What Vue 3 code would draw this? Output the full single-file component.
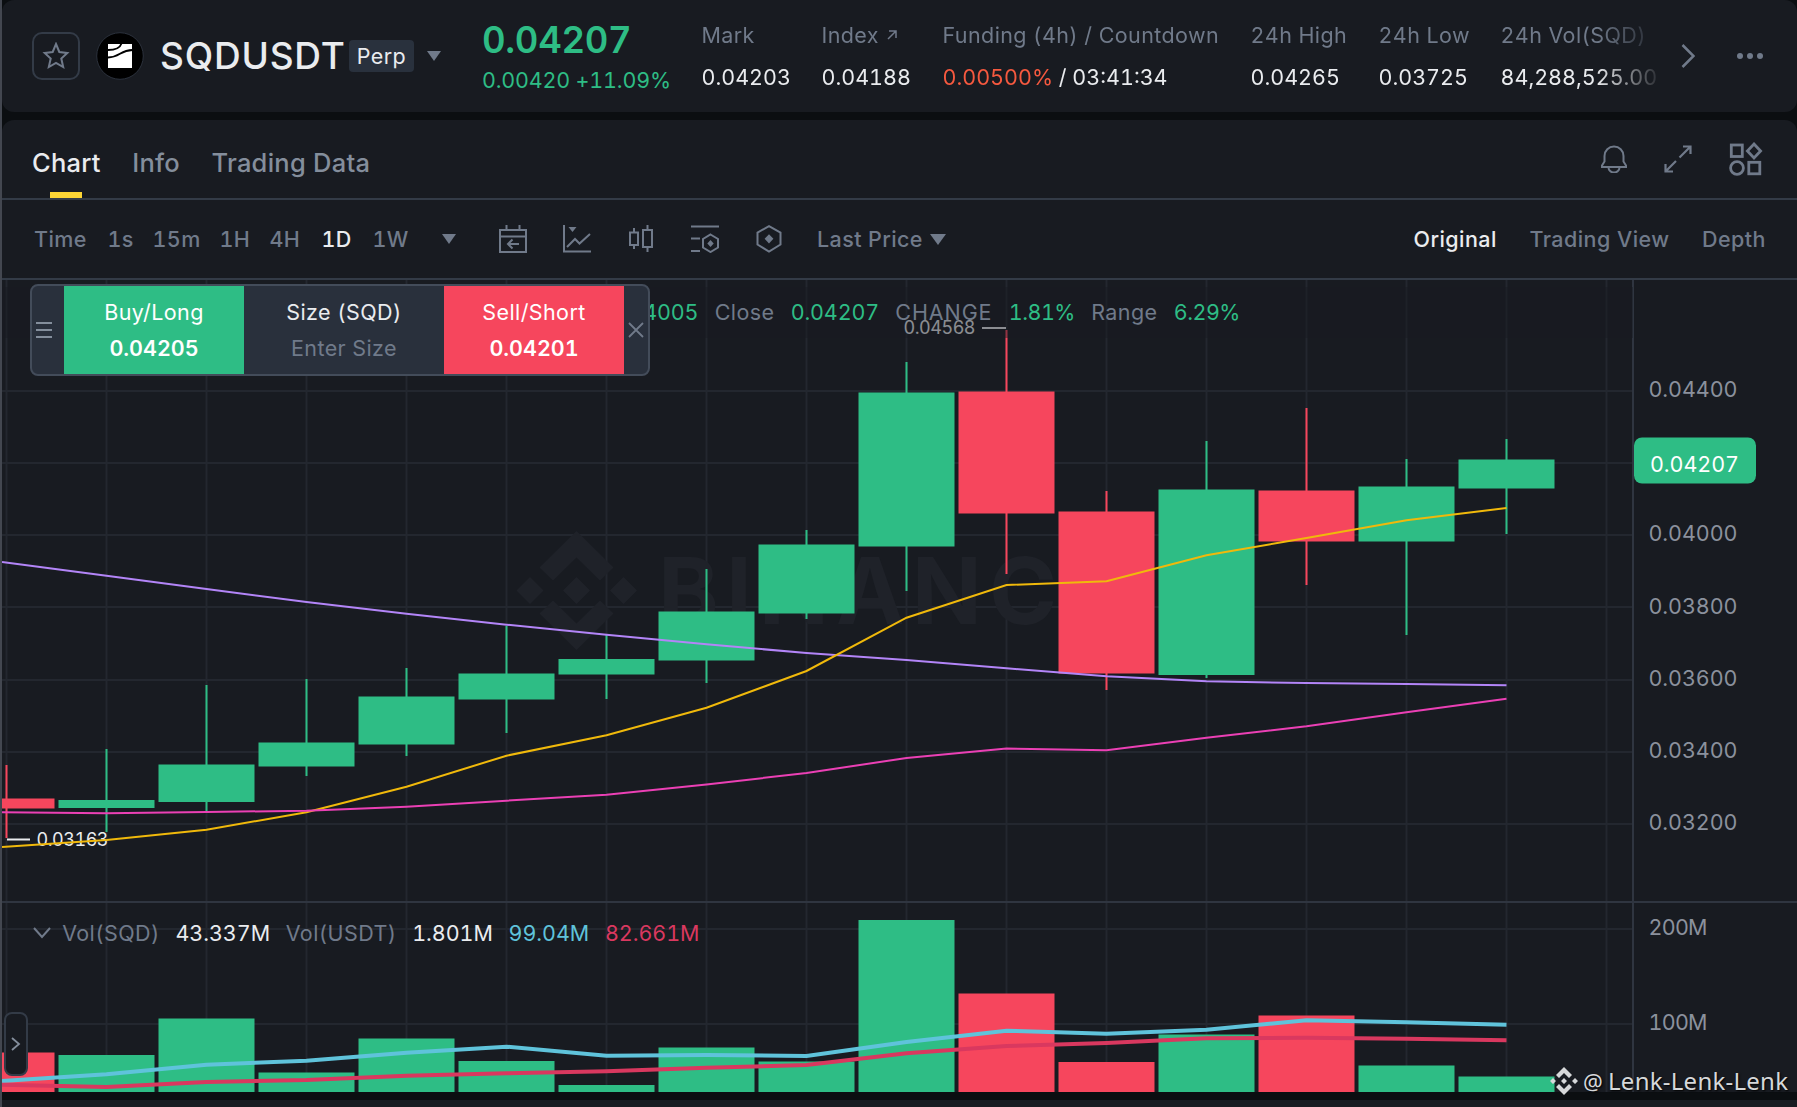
<template>
  <div class="page">
    <!-- Ticker bar -->
    <header class="ticker">
      <button class="star">
        <svg width="28" height="28" viewBox="0 0 28 28" fill="none" stroke="#707a8a" stroke-width="2">
          <path d="M14 2 17.300 10l8 .9-6 5.600 1.900 8.500L14 20.900 6.800 25l1.900-8.500-6-5.600 8-.9z" />
        </svg>
      </button>
      <svg class="coin" width="48" height="48" viewBox="0 0 48 48">
        <circle cx="24" cy="24" r="23.300" fill="#000" stroke="#2b313c" />
        <path d="M12 12h24v24H12z" fill="#fff" />
        <path d="M12 18c8 0 12-2 13.500-6.500M12 25.500c12 0 12-7.500 24.500-7.500" fill="none" stroke="#000" stroke-width="1.800" />
      </svg>
      <h1 class="symbol">SQDUSDT</h1>
      <span class="perp">Perp</span>
      <svg class="caret" width="14" height="10" viewBox="0 0 14 10"><path d="M0 0h14L7 10z" fill="#707a8a" /></svg>

      <div class="last">
        <div class="last-price">0.04207</div>
        <div class="last-change">0.00420 +11.09%</div>
      </div>

      <div class="stats">
        <div v-for="s in stats" :key="s.label" class="stat">
          <div class="stat-label">
            {{ s.label }}
            <svg v-if="s.arrow" width="10" height="10" viewBox="0 0 10 10" fill="none" stroke="#707a8a" stroke-width="1.500">
              <path d="M1 9 9 1M2 1h7v7" />
            </svg>
          </div>
          <div class="stat-value">
            <span v-if="s.rate" class="rate">{{ s.rate }}</span>{{ s.value }}
          </div>
        </div>
      </div>

      <svg class="next" width="14" height="24" viewBox="0 0 14 24" fill="none" stroke="#707a8a" stroke-width="2.500">
        <path d="M1.500 1 12.500 12 1.500 23" />
      </svg>
      <svg class="more" width="26" height="6" viewBox="0 0 26 6" fill="#707a8a">
        <circle cx="3" cy="3" r="3" /><circle cx="13" cy="3" r="3" /><circle cx="23" cy="3" r="3" />
      </svg>
    </header>

    <!-- Chart panel -->
    <main class="panel">
      <nav class="tabs">
        <a class="tab active">Chart</a>
        <a class="tab">Info</a>
        <a class="tab">Trading Data</a>
        <div class="tab-icons">
          <svg width="28" height="28" viewBox="0 0 28 28" fill="none" stroke="#707a8a" stroke-width="2">
            <path d="M2 22h24v-1.500l-2.500-4V11a9.500 9.500 0 0 0-19 0v5.500L2 20.500zM8.500 22.500a5.500 5 0 0 0 11 0" />
          </svg>
          <svg width="28" height="28" viewBox="0 0 28 28" fill="none" stroke="#707a8a" stroke-width="2.200">
            <path d="M15.500 12.500 26.500 1.500M19 1.500h7.500V9M12 16 1.500 26.500M1.500 19v7.500H9" />
          </svg>
          <svg class="widgets" width="34" height="34" viewBox="0 0 34 34" fill="none" stroke="#707a8a" stroke-width="2.800">
            <rect x="2.300" y="3" width="11" height="11.500" />
            <path d="m25 2 6.600 7-6.600 7-6.600-7z" />
            <circle cx="8" cy="26" r="6.400" />
            <rect x="19.800" y="20.300" width="11" height="11.500" />
          </svg>
        </div>
      </nav>

      <div class="toolbar">
        <div class="times">
          <span v-for="t in times" :key="t" :class="{ on: t === '1D' }">{{ t }}</span>
        </div>
        <svg class="caret" width="14" height="10" viewBox="0 0 14 10"><path d="M0 0h14L7 10z" fill="#707a8a" /></svg>
        <div class="tools">
          <svg width="28" height="28" viewBox="0 0 28 28" fill="none" stroke="#707a8a" stroke-width="2">
            <path d="M1 5h26v22H1zM1 11.500h26M7.500 0v5M20.500 0v5M20 19H9M13.500 14.500 9 19l4.500 4.500" />
          </svg>
          <svg width="28" height="28" viewBox="0 0 28 28" fill="none" stroke="#707a8a" stroke-width="2">
            <path d="M1 0v26.500h27M4 22l8-8 4.500 4.500L27 9" />
            <path d="M5.500 2h8L9.500 7z" fill="#707a8a" stroke="none" />
          </svg>
          <svg width="28" height="28" viewBox="0 0 28 28" fill="none" stroke="#707a8a" stroke-width="2">
            <path d="M3 7.500h8v12.500H3zM7 3v4.500M7 20v4M16 5h9v17h-9zM20.500 0v5M20.500 22v5" />
          </svg>
          <svg width="28" height="28" viewBox="0 0 28 28" fill="none" stroke="#707a8a" stroke-width="2">
            <path d="M0 1.500h28M0 13.500h9M0 26h9M19.500 9.500l7.500 4.500v8.500L19.500 27 12 22.500V14z" />
            <path d="m19.500 15 3.200 3.500-3.200 3.500-3.200-3.500z" fill="#707a8a" stroke="none" />
          </svg>
          <svg width="28" height="28" viewBox="0 0 28 28" fill="none" stroke="#707a8a" stroke-width="2">
            <path d="m14 1.200 11.500 6.300v12L14 26.500 2.500 19.500v-12z" />
            <path d="m14 9.200 4.400 4.600-4.400 4.600-4.400-4.600z" fill="#707a8a" stroke="none" />
          </svg>
        </div>
        <span class="price-type">Last Price</span>
        <svg class="caret" width="16" height="11" viewBox="0 0 16 11"><path d="M0 0h16L8 11z" fill="#707a8a" /></svg>
        <div class="views">
          <span class="on">Original</span>
          <span>Trading View</span>
          <span>Depth</span>
        </div>
      </div>

      <div class="chart">
        <svg class="plot" width="1797" height="812" viewBox="0 280 1797 812">
          <!-- grid -->
          <g stroke="#23272f" stroke-width="2">
            <line v-for="i in 17" :key="'v' + i" :x1="colX(i - 1)" :x2="colX(i - 1)" y1="280" y2="1092" />
            <line v-for="y in gridY" :key="'h' + y" x1="2" x2="1633" :y1="y" :y2="y" />
          </g>

          <!-- watermark -->
          <g fill="#1f2229">
            <path d="M576.500 531 613.500 567.500l-13.500 13-23.500-23-23.500 23-13.500-13zM576.500 650 613.500 613.500l-13.500-13-23.500 23-23.500-23-13.500 13z" />
            <path d="m576.500 577 13.500 13.500-13.500 13.500-13.500-13.500zM530 577l13.500 13.500L530 604l-13.500-13.500zM623.500 577l13.500 13.500-13.500 13.500-13.500-13.500z" />
            <text x="658" y="624" class="brand" textLength="462">BINANCE</text>
          </g>

          <!-- candles -->
          <g v-for="(c, i) in candles" :key="'c' + i" :fill="c[0] ? '#2ebd85' : '#f6465d'">
            <rect :x="colX(i) - 1" :y="c[1]" width="2" :height="c[4] - c[1]" />
            <rect :x="colX(i) - 48" :y="c[2]" width="96" :height="c[3] - c[2]" />
            <rect :x="colX(i) - 48" :y="c[5]" width="96" :height="1092 - c[5]" />
          </g>

          <!-- high / low marks -->
          <path d="M982 328h24" stroke="#eaecef" stroke-width="2" />
          <text x="903.500" y="334" class="mark" textLength="72">0.04568</text>
          <path d="M7 839.500h23" stroke="#eaecef" stroke-width="2" />
          <text x="36.500" y="846" class="mark" textLength="72">0.03163</text>

          <!-- moving averages -->
          <g fill="none">
            <polyline :points="toPoints(maPurple)" stroke="#b385f8" stroke-width="2" />
            <polyline :points="toPoints(maYellow)" stroke="#f0b90b" stroke-width="2" />
            <polyline :points="toPoints(maPink)" stroke="#eb40b5" stroke-width="2" />
            <polyline :points="toPoints(volCyan)" stroke="#5fc3db" stroke-width="4" />
            <polyline :points="toPoints(volRed)" stroke="#d9385f" stroke-width="4" />
          </g>

          <!-- axes -->
          <path d="M2 902h1795M1633 280v812" stroke="#2f3540" stroke-width="2" />
          <text v-for="a in axis" :key="a[0]" x="1648.500" :y="a[1]" class="axis" :textLength="a[2]">{{ a[0] }}</text>
          <rect x="1634" y="437.500" width="122" height="46" rx="8" fill="#2ebd85" />
          <text x="1650" y="472" class="axis tag" textLength="89">0.04207</text>
        </svg>

        <div class="ohlc">
          <span class="up low">0.04005</span>
          <span>Close</span><span class="up">0.04207</span>
          <span class="wide">CHANGE</span><span class="up pct">1.81%</span>
          <span>Range</span><span class="up pct">6.29%</span>
        </div>

        <div class="vol">
          <svg width="18" height="12" viewBox="0 0 18 12" fill="none" stroke="#707a8a" stroke-width="2"><path d="m1 1 8 9 8-9" /></svg>
          <span>Vol(SQD)</span><span class="num">43.337M</span>
          <span>Vol(USDT)</span><span class="num">1.801M</span>
          <span class="num cyan">99.04M</span><span class="num crimson">82.661M</span>
        </div>

        <!-- Quick order box -->
        <div class="order">
          <div class="grip"><i></i><i></i><i></i></div>
          <div class="side buy"><span>Buy/Long</span><b>0.04205</b></div>
          <div class="side size"><span>Size (SQD)</span><em>Enter Size</em></div>
          <div class="side sell"><span>Sell/Short</span><b>0.04201</b></div>
          <div class="close">
            <svg width="16" height="16" viewBox="0 0 16 16" stroke="#707a8a" stroke-width="1.800"><path d="m1 1 14 14M15 1 1 15" /></svg>
          </div>
        </div>

        <div class="drawer">
          <svg width="10" height="14" viewBox="0 0 10 14" fill="none" stroke="#848e9c" stroke-width="1.800"><path d="m1 1 7 6-7 6" /></svg>
        </div>
      </div>
    </main>
    <div class="below"></div>

    <div class="author">
      <svg width="28" height="28" viewBox="0 0 28 28" fill="currentColor">
        <path d="m14 0 8 8-3 3-5-5-5 5-3-3zM14 28l8-8-3-3-5 5-5-5-3 3zM14 11l3 3-3 3-3-3zM3 11l3 3-3 3-3-3zM25 11l3 3-3 3-3-3z" />
      </svg>
      <span class="at">@</span><span>Lenk-Lenk-Lenk</span>
    </div>
  </div>
</template>

<script setup>
const stats = [
  { label: 'Mark', value: '0.04203' },
  { label: 'Index', value: '0.04188', arrow: true },
  { label: 'Funding (4h) / Countdown', rate: '0.00500%', value: ' / 03:41:34' },
  { label: '24h High', value: '0.04265' },
  { label: '24h Low', value: '0.03725' },
  { label: '24h Vol(SQD)', value: '84,288,525.00' }
]

const times = ['Time', '1s', '15m', '1H', '4H', '1D', '1W']

const gridY = [391, 463, 535, 607, 680, 752, 824, 929, 1024]

// label, baseline, width
const axis = [
  ['0.04400', 397, 89],
  ['0.04000', 541, 89],
  ['0.03800', 614, 89],
  ['0.03600', 686, 89],
  ['0.03400', 758, 89],
  ['0.03200', 830, 89],
  ['200M', 935, 59],
  ['100M', 1030, 59]
]

// up, high, body top, body bottom, low, volume top
const candles = [
  [0, 765, 798.5, 808.5, 838, 1052.5],
  [1, 749, 800, 808, 832, 1055],
  [1, 685, 764.5, 802, 811, 1018.5],
  [1, 679, 742.5, 766.5, 776, 1072.5],
  [1, 668, 696.5, 744.5, 756, 1038.5],
  [1, 626, 673.5, 699.5, 733, 1061],
  [1, 635, 659, 674.5, 699, 1085],
  [1, 569, 611.5, 660.5, 683, 1047.5],
  [1, 530, 544.5, 613.5, 619, 1061.5],
  [1, 362, 392.5, 546.5, 591, 920],
  [0, 330, 391.5, 513.5, 574, 993.5],
  [0, 491, 511.5, 673.5, 690, 1062],
  [1, 441, 489.5, 675, 678, 1034.5],
  [0, 408, 490.5, 541.5, 585, 1015.5],
  [1, 459, 486.5, 541.5, 635, 1065.5],
  [1, 439, 459.5, 488.5, 534, 1076.5]
]

const maYellow = [847, 840, 829.7, 812.3, 786.7, 755.7, 735.3, 707.7, 671, 617.7, 585, 581.3, 555.3, 538, 520.3, 508]
const maPurple = [562, 575.7, 589, 602, 613.7, 624.7, 634.7, 644.3, 653, 660, 668.3, 676.3, 681.3, 683, 684, 685.3]
const maPink = [812.3, 813.3, 812, 810.7, 806.7, 800.7, 794.7, 784.5, 773, 758, 748.5, 750.3, 737.8, 726.3, 712.3, 698.7]
const volCyan = [1081, 1074.3, 1064.7, 1060.7, 1052.7, 1046.7, 1055.7, 1055, 1056, 1042, 1030.7, 1033.7, 1029.7, 1020.3, 1022.3, 1024.7]
const volRed = [1084.7, 1087, 1082, 1080, 1075.7, 1073.3, 1071.3, 1067.7, 1065, 1053.3, 1046, 1043, 1038.3, 1037.7, 1038.7, 1040.3]

const colX = (i) => 6.5 + i * 100

// the first point sits on the left edge of the plot
const toPoints = (ys) => ys.map((y, i) => `${i ? colX(i) : 2},${y}`).join(' ')
</script>

<style>
body {
  margin: 0;
  background: #0b0e11;
}
</style>

<style scoped>
.page {
  position: relative;
  box-sizing: border-box;
  width: 1797px;
  height: 1107px;
  overflow: hidden;
  display: flex;
  flex-direction: column;
  gap: 8px;
  background: #0b0e11;
  font-family: Inter, "Liberation Sans", sans-serif;
  font-size: 21.5px;
  font-variant-numeric: tabular-nums;
  letter-spacing: 0.4px;
  line-height: 26px;
  color: #707a8a;
  white-space: nowrap;
}

.page::after {
  content: "";
  position: absolute;
  left: 0;
  top: 0;
  width: 2px;
  height: 100%;
  background: #434750;
}

.ticker {
  display: flex;
  align-items: center;
  box-sizing: border-box;
  flex: none;
  height: 112px;
  margin-left: 2px;
  padding-left: 30px;
  background: #181b21;
  border-radius: 12px;
}

svg {
  display: block;
  flex: none;
}

.star {
  display: flex;
  align-items: center;
  justify-content: center;
  width: 48px;
  height: 48px;
  padding: 0;
  box-sizing: border-box;
  border: 2px solid #333b47;
  border-radius: 10px;
  background: none;
}

.coin {
  margin-left: 16px;
}

.symbol {
  width: 189px;
  margin: 0 0 0 16px;
  font-size: 37px;
  font-weight: 500;
  letter-spacing: 0.8px;
  line-height: 44px;
  color: #eaecef;
}

.perp {
  width: 65px;
  height: 32px;
  line-height: 32px;
  text-align: center;
  color: #eaecef;
  background: #29313d;
  border-radius: 4px;
}

.perp + .caret {
  margin-left: 13px;
}

.last {
  width: 220px;
  margin-left: 41px;
  color: #2ebd85;
}

.last-price {
  font-size: 36.5px;
  font-weight: 600;
  letter-spacing: -0.3px;
  line-height: 44px;
  margin-top: -2px;
}

.last-change {
  line-height: 26px;
  margin-top: 5px;
  letter-spacing: -0.2px;
}

.stats {
  display: grid;
  grid-template-columns: 120px 121px 308px 128px 122px 160px;
  width: 959px;
  margin-left: -0.5px;
  margin-right: 0.5px;
  -webkit-mask-image: linear-gradient(90deg, #000 895px, transparent 962px);
  mask-image: linear-gradient(90deg, #000 895px, transparent 962px);
}

.stat-label {
  display: flex;
  align-items: center;
  gap: 8px;
}

.stat-value {
  margin-top: 16px;
  color: #eaecef;
  letter-spacing: 0;
  white-space: pre;
}

.rate {
  color: #f6593f;
}

.next {
  margin-left: 20px;
}

.more {
  margin-left: 42px;
}

.panel {
  flex: none;
  height: 972px;
  margin-left: 2px;
  background: #181b21;
  border-radius: 12px 12px 0 0;
}

.tabs {
  display: flex;
  box-sizing: border-box;
  height: 80px;
  padding: 0 34px 0 30px;
  border-bottom: 2px solid #333b47;
  gap: 31.500px;
  font-size: 25.5px;
  font-weight: 500;
  letter-spacing: 0.25px;
  line-height: 85px;
  color: #848e9c;
}

.tab.active {
  position: relative;
  color: #eaecef;
}

.tab.active::after {
  content: "";
  position: absolute;
  left: 18px;
  bottom: 0;
  width: 32px;
  height: 6px;
  background: #fcd535;
}

.tab-icons {
  display: flex;
  align-items: center;
  gap: 36px;
  margin-left: auto;
}

.widgets {
  margin-left: 1px;
}

.toolbar {
  display: flex;
  align-items: center;
  box-sizing: border-box;
  height: 80px;
  padding: 0 31px 0 32px;
  border-bottom: 2px solid #333b47;
  font-weight: 500;
}

.times {
  display: grid;
  grid-template-columns: 73.5px 45px 67px 50px 52px 51px 69.5px;
}

.on {
  color: #eaecef;
}

.tools {
  display: flex;
  gap: 36px;
  margin-left: 43px;
}

.price-type {
  width: 105px;
  margin-left: 34px;
}

.price-type + .caret {
  margin-left: 8px;
}

.views {
  display: flex;
  gap: 32.500px;
  margin-left: auto;
  letter-spacing: 0.45px;
}

.chart {
  position: relative;
  height: 812px;
  overflow: hidden;
}

.plot {
  margin-left: -2px;
}

.plot text {
  font-family: Inter, "Liberation Sans", sans-serif;
  letter-spacing: 0;
}

.plot .brand {
  font-size: 92px;
  font-weight: 700;
}

.mark {
  font-size: 18px;
  fill: #eaecef;
}

.axis {
  font-size: 21.5px;
  fill: #8b919d;
}

.axis.tag {
  fill: #fff;
}

/* legends and widgets lie over the plot */
.ohlc {
  position: absolute;
  left: 0;
  top: 7px;
  display: flex;
  gap: 16.300px;
  height: 51px;
  width: 1631px;
  line-height: 51px;
  background: rgba(24, 27, 33, 0.45);
}

.up {
  color: #2ebd85;
  letter-spacing: -0.15px;
}

.pct {
  letter-spacing: -0.5px;
}

.low {
  margin-left: 608px;
}

.wide {
  letter-spacing: 0.9px;
}

.vol {
  position: absolute;
  left: 31px;
  top: 640px;
  display: flex;
  align-items: center;
  gap: 15.700px;
}

.vol svg {
  margin-right: -4.500px;
}

.num {
  color: #eaecef;
  letter-spacing: -0.05px;
}

.cyan {
  color: #5fc3db;
}

.crimson {
  color: #d9385f;
}

.order {
  position: absolute;
  left: 28px;
  top: 4px;
  display: flex;
  box-sizing: border-box;
  width: 620px;
  height: 92px;
  border: 2px solid #434c5a;
  border-radius: 8px;
  background: #29303c;
  overflow: hidden;
}

.grip {
  display: flex;
  flex-direction: column;
  justify-content: center;
  gap: 5px;
  width: 28px;
  padding-left: 4px;
}

.grip i {
  width: 16px;
  height: 2px;
  background: #848e9c;
}

.side {
  display: flex;
  flex-direction: column;
  gap: 10px;
  align-items: center;
  width: 180px;
  box-sizing: border-box;
  padding-top: 13px;
  color: #fff;
}

.side b {
  font-weight: 600;
  letter-spacing: 0;
}

.side em {
  font-style: normal;
  color: #707a8a;
}

.buy {
  background: #2ebd85;
}

.size {
  width: 200px;
  color: #eaecef;
}

.sell {
  background: #f6465d;
}

.close {
  display: flex;
  align-items: center;
  padding-left: 4px;
}

.drawer {
  position: absolute;
  left: 2px;
  top: 732px;
  display: flex;
  align-items: center;
  justify-content: center;
  box-sizing: border-box;
  width: 24px;
  height: 64px;
  border: 2px solid #333b47;
  border-radius: 8px;
  background: #181b21;
}

.below {
  flex: none;
  height: 7px;
  margin-left: 2px;
  background: #181b21;
}

.author {
  position: absolute;
  left: 1550px;
  top: 1065px;
  display: flex;
  align-items: center;
  font-family: "Noto Sans", sans-serif;
  font-size: 24px;
  letter-spacing: 0.250px;
  line-height: 32px;
  color: #d6d8da;
  text-shadow: 1px 1px 2px #000;
}

.at {
  font-size: 22px;
  margin: 0 5px 0 5px;
}
</style>
